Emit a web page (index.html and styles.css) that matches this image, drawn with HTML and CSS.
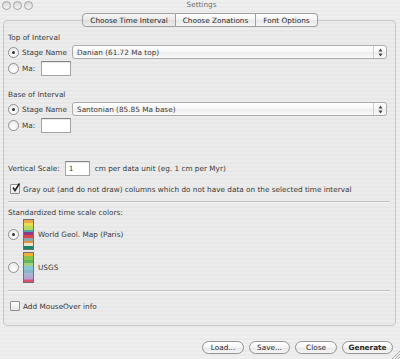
FILE: index.html
```html
<!DOCTYPE html>
<html lang="en">
<head>
    <meta charset="UTF-8">
    <title>Settings</title>
    <link rel="stylesheet" href="styles.css">
</head>
<body>
<div class="window">
    <!-- Title bar -->
    <div class="titlebar">
        <div class="lights"><span></span><span></span><span></span></div>
        <div class="title">Settings</div>
    </div>

    <!-- Tabs -->
    <div class="tabs">
        <span class="tab selected">Choose Time Interval</span>
        <span class="tab">Choose Zonations</span>
        <span class="tab">Font Options</span>
    </div>

    <div class="pane">
        <div class="group-title">Top of Interval</div>
        <div class="row">
            <span class="radio on"></span>
            <span class="label stage">Stage Name</span>
            <div class="popup">
                <span class="popup-text">Danian (61.72 Ma top)</span>
                <span class="arrows"><svg width="5" height="9" viewBox="0 0 5 9"><path d="M2.5 0.5 L4.5 3.5 L0.5 3.5 Z M2.5 8.5 L4.5 5.5 L0.5 5.5 Z" fill="#444"/></svg></span>
            </div>
        </div>
        <div class="row">
            <span class="radio"></span>
            <span class="label ma">Ma:</span>
            <span class="field ma-field"></span>
        </div>

        <div class="group-title second">Base of Interval</div>
        <div class="row">
            <span class="radio on"></span>
            <span class="label stage">Stage Name</span>
            <div class="popup">
                <span class="popup-text">Santonian (85.85 Ma base)</span>
                <span class="arrows"><svg width="5" height="9" viewBox="0 0 5 9"><path d="M2.5 0.5 L4.5 3.5 L0.5 3.5 Z M2.5 8.5 L4.5 5.5 L0.5 5.5 Z" fill="#444"/></svg></span>
            </div>
        </div>
        <div class="row">
            <span class="radio"></span>
            <span class="label ma">Ma:</span>
            <span class="field ma-field"></span>
        </div>

        <div class="row scale-row">
            <span class="label">Vertical Scale:</span>
            <span class="field scale-field">1</span>
            <span class="label">cm per data unit (eg. 1 cm per Myr)</span>
        </div>
        <div class="row check-row">
            <span class="checkbox on"><svg width="10" height="10" viewBox="0 0 10 10"><path d="M2 4.5 L4 7.5 L8.5 0.5" fill="none" stroke="#222" stroke-width="1.6"/></svg></span>
            <span class="label">Gray out (and do not draw) columns which do not have data on the selected time interval</span>
        </div>

        <div class="separator"></div>

        <div class="group-title colors-title">Standardized time scale colors:</div>
        <div class="swatch-row">
            <span class="radio on"></span>
            <span class="swatch paris"></span>
            <span class="label">World Geol. Map (Paris)</span>
        </div>
        <div class="swatch-row">
            <span class="radio"></span>
            <span class="swatch usgs"></span>
            <span class="label">USGS</span>
        </div>

        <div class="separator lower"></div>

        <div class="row check-row mouse-row">
            <span class="checkbox"></span>
            <span class="label">Add MouseOver info</span>
        </div>
    </div>

    <!-- Buttons -->
    <div class="buttons">
        <span class="button load">Load...</span>
        <span class="button save">Save...</span>
        <span class="button close">Close</span>
        <span class="button generate">Generate</span>
    </div>
    <div class="grip"><svg width="9" height="9" viewBox="0 0 9 9"><path d="M9 1 L1 9 M9 4 L4 9 M9 7 L7 9" stroke="#999" stroke-width="0.8"/></svg></div>
</div>
</body>
</html>
```

FILE: styles.css
```css
body, html {
    margin: 0;
    padding: 0;
}

body {
    font-family: "DejaVu Sans", Verdana, sans-serif;
    font-size: 7.3px;
    color: #3a3a3a;
}

.window {
    position: relative;
    width: 400px;
    height: 359px;
    overflow: hidden;
    background: repeating-linear-gradient(to bottom, #efefef 0, #efefef 2px, #eaeaea 2px, #eaeaea 4px);
}

/* Title bar */
.titlebar {
    height: 12px;
    display: flex;
    align-items: center;
    position: relative;
}

.lights {
    display: flex;
    gap: 2px;
    padding-left: 2px;
    margin-top: -2px;
}

.lights span {
    width: 7px;
    height: 7px;
    border-radius: 50%;
    border: 1px solid #a4a4a4;
    background: linear-gradient(#d8d8d8, #f4f4f4);
}

.title {
    flex: 1;
    text-align: center;
    color: #707070;
    margin-top: -3px;
    margin-right: 30px;
}

/* Tabs */
.tabs {
    display: flex;
    justify-content: center;
    height: 14px;
    margin-top: 1px;
    position: relative;
    z-index: 2;
}

.tab {
    display: flex;
    align-items: center;
    padding: 0 7px;
    border: 1px solid #a0a0a0;
    border-left: none;
    background: linear-gradient(#ffffff, #f2f2f2 50%, #e8e8e8 51%, #f6f6f6);
    color: #2a2a2a;
}

.tab:first-child {
    border-left: 1px solid #a0a0a0;
    border-radius: 4px 0 0 4px;
}

.tab:last-child {
    border-radius: 0 4px 4px 0;
}

.tab.selected {
    background: linear-gradient(#f6f6f6, #e8e8e8 50%, #dedede 51%, #ececec);
}

/* Pane */
.pane {
    margin: -7px 4px 0 3px;
    height: 306px;
    box-sizing: border-box;
    border: 1px solid #c8c8c8;
    border-radius: 4px;
    padding: 11px 0 0 4px;
    background: rgba(0, 0, 0, 0.01);
}

.group-title {
    height: 12px;
    line-height: 12px;
}

.group-title.second {
    margin-top: 13px;
}

.row {
    height: 16px;
    display: flex;
    align-items: center;
}

.label {
    white-space: nowrap;
}

.label.stage {
    width: 50px;
}

.label.ma {
    width: 19px;
}

.radio {
    width: 9px;
    height: 9px;
    border-radius: 50%;
    border: 1px solid #909090;
    background: radial-gradient(circle at 50% 70%, #ffffff, #e6e6e6);
    margin-right: 3px;
    position: relative;
    flex-shrink: 0;
}

.radio.on::after {
    content: "";
    position: absolute;
    left: 3px;
    top: 3px;
    width: 3px;
    height: 3px;
    border-radius: 50%;
    background: #333;
}

.popup {
    flex: 1;
    margin-right: 8px;
    height: 12px;
    display: flex;
    align-items: center;
    justify-content: space-between;
    border: 1px solid #ababab;
    border-radius: 3px;
    background: linear-gradient(#ffffff, #f6f6f6 50%, #ededed 51%, #fafafa);
    padding-left: 4px;
}

.arrows {
    width: 12px;
    height: 12px;
    display: flex;
    align-items: center;
    justify-content: center;
    border-left: 1px solid #cccccc;
}

.field {
    display: inline-block;
    height: 13px;
    line-height: 13px;
    background: #fff;
    border: 1px solid #a4a4a4;
    border-top-color: #848484;
    box-shadow: inset 0 1px 1px rgba(0, 0, 0, 0.1);
    box-sizing: border-box;
}

.ma-field {
    width: 30px;
    height: 15px;
}

.scale-row {
    margin-top: 27px;
}

.scale-field {
    width: 25px;
    height: 15px;
    line-height: 13px;
    padding-left: 3px;
    margin: 0 5px 0 5px;
}

.check-row {
    margin-top: 5px;
    padding-left: 2px;
}

.checkbox {
    width: 8px;
    height: 8px;
    border: 1px solid #909090;
    border-radius: 1px;
    background: linear-gradient(#ffffff, #e6e6e6);
    margin-right: 3px;
    position: relative;
    flex-shrink: 0;
}

.checkbox svg {
    position: absolute;
    left: 0;
    top: -2px;
}

.separator {
    height: 0;
    border-top: 1px solid #c0c0c0;
    border-bottom: 1px solid #f8f8f8;
    margin: 4px 5px 0 0;
}

.colors-title {
    margin-top: 4px;
}

.swatch-row {
    height: 30px;
    display: flex;
    align-items: center;
}

.swatch-row + .swatch-row {
    margin-top: 3px;
}

.swatch-row .radio {
    margin-right: 4px;
}

.swatch {
    width: 9px;
    height: 29px;
    border: 1px solid #707070;
    margin-right: 4px;
}

.swatch.paris {
    background: linear-gradient(to bottom,
        #f0a84c 0 11%, #e6e050 11% 22%, #b8d860 22% 33%, #52a8a0 33% 42%,
        #8c3a88 42% 52%, #e04444 52% 62%, #88a8b0 62% 71%, #e0983c 71% 81%,
        #f0e4c8 81% 88%, #14866a 88% 100%);
}

.swatch.usgs {
    background: linear-gradient(to bottom,
        #f0b034 0 12%, #88c448 12% 24%, #60b45c 24% 36%, #a0d080 36% 46%,
        #84c8d4 46% 58%, #88b8c8 58% 68%, #a8b4d4 68% 78%, #b4a4d0 78% 88%,
        #c47cb0 88% 94%, #e0506c 94% 100%);
}

.separator.lower {
    margin-top: 8px;
}

.mouse-row {
    margin-top: 6px;
}

/* Buttons */
.buttons {
    display: flex;
    justify-content: flex-end;
    gap: 5px;
    padding-right: 7px;
    margin-top: 15px;
}

.button {
    height: 13px;
    box-sizing: border-box;
    display: flex;
    align-items: center;
    justify-content: center;
    border: 1px solid #939393;
    border-radius: 7px;
    background: linear-gradient(#ffffff, #f4f4f4 50%, #e6e6e6 51%, #f6f6f6);
    color: #2a2a2a;
}

.button.load { width: 42px; }
.button.save { width: 41px; }
.button.close { width: 42px; }
.button.generate { width: 51px; font-weight: bold; }

.grip {
    position: absolute;
    right: 0;
    bottom: 0;
    width: 9px;
    height: 9px;
}
```
